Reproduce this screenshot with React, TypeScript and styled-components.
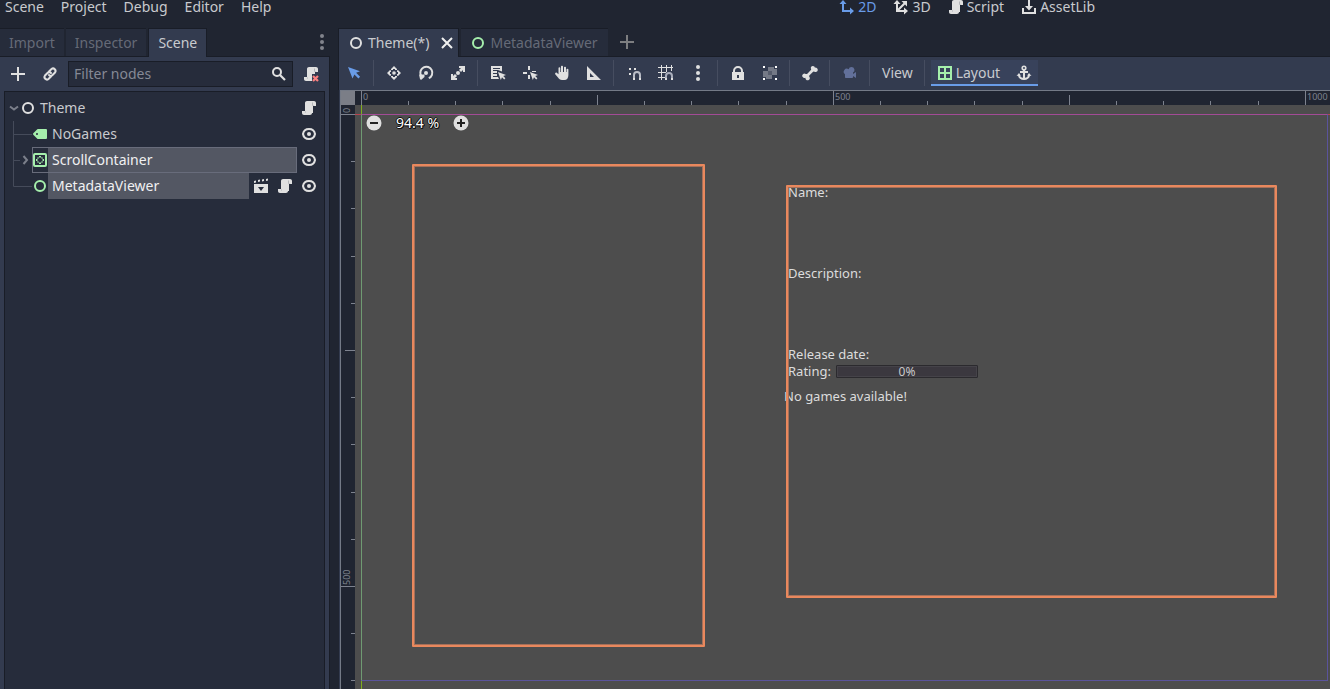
import React, { useEffect, useState } from "react";
import styled, { createGlobalStyle, css } from "styled-components";

const color = {
  base: "#333b4f",
  dark: "#262c3b",
  darker: "#202531",
  edge: "#191d27",
  line: "#464d60",
  text: "#c8cace",
  dim: "#656a77",
  icon: "#e0e0e0",
  accent: "#699ce8",
  green: "#a5efac",
  orange: "#e9885d",
};

const GlobalStyle = createGlobalStyle`
  * { box-sizing: border-box; }
  body { margin: 0; background: ${color.darker}; }
  button, input { font: inherit; color: inherit; }
  ul { list-style: none; margin: 0; padding: 0; }
`;

const Editor = styled.div`
  display: flex;
  flex-direction: column;
  height: 100vh;
  overflow: hidden;
  background: ${color.darker};
  color: ${color.text};
  font: 14px/20px "Noto Sans", "Open Sans", sans-serif;
`;

const PlainButton = styled.button`
  display: flex;
  align-items: center;
  justify-content: center;
  padding: 0;
  border: 0;
  background: none;
  white-space: nowrap;
  flex: none;
`;

const Header = styled.header`
  display: flex;
  flex: none;
  height: 28px;
  align-items: flex-start;
  justify-content: space-between;
  padding: 0 235px 0 5px;
  line-height: 14px;
`;

const MenuBar = styled.nav`
  display: flex;
  gap: 17px;
`;

const ModeButton = styled(PlainButton)<{ $on?: boolean }>`
  height: 14px;
  gap: 3px;
  color: ${(p) => (p.$on ? color.accent : color.text)};
`;

const Workspace = styled.div`
  display: flex;
  flex: 1;
  min-height: 0;
  gap: 8px;
`;

const Dock = styled.aside`
  display: flex;
  flex-direction: column;
  flex: none;
  width: 330px;
  min-height: 0;
`;

const Main = styled.main`
  display: flex;
  flex-direction: column;
  flex: 1;
  min-width: 0;
`;

const TabStrip = styled.div`
  display: flex;
  flex: none;
  height: 29px;
  gap: 2px;
  border-bottom: 1px solid ${color.edge};
`;

const Tab = styled(PlainButton)<{ $on?: boolean }>`
  height: 28px;
  padding: 0 9px;
  border-top: 1px solid ${color.edge};
  background: ${color.dark};
  color: ${color.dim};
  ${(p) =>
    p.$on &&
    css`
      height: 29px;
      border-left: 1px solid ${color.edge};
      border-right: 1px solid ${color.edge};
      background: ${color.base};
      color: ${color.text};
    `}
`;

const SceneTab = styled(Tab)`
  gap: 4px;
  padding-right: ${(p) => (p.$on ? 3 : 10)}px;
`;

const CloseMark = styled.svg`
  margin-left: 6px;
`;

const StripButton = styled(PlainButton)<{ $end?: boolean }>`
  width: 34px;
  height: 28px;
  ${(p) => p.$end && "width: 16px; margin-left: auto;"}
`;

const DockBody = styled.div`
  display: flex;
  flex-direction: column;
  flex: 1;
  min-height: 0;
  gap: 4px;
  padding: 4px 4px 0;
  border-right: 1px solid ${color.edge};
  background: ${color.base};
`;

const DockTools = styled.div`
  display: flex;
  flex: none;
  gap: 4px;
`;

const ToolButton = styled(PlainButton)`
  width: 28px;
  height: 26px;
`;

const FilterBox = styled.label`
  display: flex;
  align-items: center;
  flex: 1;
  min-width: 0;
  height: 26px;
  padding: 0 5px;
  border: 1px solid ${color.edge};
  background: ${color.dark};
`;

const FilterInput = styled.input`
  flex: 1;
  min-width: 0;
  padding: 0;
  border: 0;
  outline: 0;
  background: none;
  &::placeholder {
    color: #858995;
    opacity: 1;
  }
`;

const TreePanel = styled.div`
  flex: 1;
  min-height: 0;
  padding-top: 3px;
  border: 1px solid ${color.edge};
  border-bottom: 0;
  background: ${color.dark};
`;

const TreeRow = styled.li`
  display: flex;
  align-items: center;
  height: 26px;
  padding-right: 3px;
`;

const Guide = styled.svg`
  flex: none;
`;

const NodeButton = styled(PlainButton)<{ $focus?: boolean }>`
  flex: 1;
  height: 26px;
  justify-content: flex-start;
  ${(p) => p.$focus && "outline: 1px solid #686c7b; outline-offset: -1px;"}
`;

const NodeName = styled.span<{ $selected?: boolean }>`
  flex: 1;
  padding-left: 4px;
  line-height: 26px;
  text-align: left;
  ${(p) => p.$selected && "background: #535763; color: #f0f0f1;"}
`;

const RowAction = styled(PlainButton)`
  width: 24px;
  height: 24px;
`;

const CanvasTools = styled.div`
  display: flex;
  flex: none;
  align-items: flex-start;
  gap: 4px;
  height: 33px;
  padding: 3px 1px 0;
  border-left: 1px solid ${color.edge};
  background: ${color.base};
`;

const Separator = styled.span`
  flex: none;
  width: 4px;
  height: 26px;
  background: linear-gradient(${color.line}, ${color.line}) 1px 0 / 1px 100% no-repeat;
`;

const TextButton = styled(PlainButton)`
  height: 26px;
  padding: 0 6px;
`;

const LayoutGroup = styled.div`
  display: flex;
  align-items: center;
  height: 26px;
  padding: 0 6px;
  gap: 16px;
  background: #38425b;
  box-shadow: inset 0 -2px ${color.accent};
`;

const LayoutButton = styled(PlainButton)`
  gap: 3px;
`;

const Viewport = styled.section`
  display: grid;
  flex: 1;
  min-height: 0;
  grid-template: 14px minmax(0, 1fr) / 14px minmax(0, 1fr);
  margin-left: 2px;
  border-top: 1px solid #747a86;
  border-left: 1px solid #747a86;
  box-shadow: -1px 0 ${color.base};
`;

const Corner = styled.div`
  background: #7b7e87;
`;

const RulerSvg = styled.svg`
  display: block;
  width: 100%;
  height: 100%;
  overflow: hidden;
  background: ${color.darker};
  font-size: 9px;
`;

const Stage = styled.div`
  position: relative;
  overflow: hidden;
  background: #4d4d4d;
  color: #dcdcdc;
`;

type Box = { $x: number; $y: number; $w: number; $h: number };

const placed = css<Box>`
  position: absolute;
  left: ${(p) => p.$x}px;
  top: ${(p) => p.$y}px;
  width: ${(p) => p.$w}px;
  height: ${(p) => p.$h}px;
`;

const AxisX = styled.div`
  position: absolute;
  left: 0;
  right: 0;
  top: 9px;
  height: 1px;
  background: #b8434f;
`;

const AxisY = styled.div`
  position: absolute;
  top: 0;
  bottom: 0;
  left: 6px;
  width: 1px;
  background: #7fae1c;
`;

const Bounds = styled.div<Box>`
  ${placed}
  border: 1px solid #5a539b;
  border-top-color: #a34b96;
  border-left-color: #6f9a72;
`;

const Selection = styled.div<Box>`
  ${placed}
  border: 2px solid ${color.orange};
  border-radius: 1px;
  box-shadow: inset 0 0 0 1px #a5705a;
`;

const CanvasText = styled.span<{ $x: number; $y: number }>`
  position: absolute;
  left: ${(p) => p.$x}px;
  top: ${(p) => p.$y}px;
  font-size: 13px;
  line-height: 16px;
  white-space: nowrap;
`;

const Progress = styled.div<Box>`
  ${placed}
  border: 1px solid #2b2a2e;
  border-radius: 1px;
  background: #3b383f;
  box-shadow: inset 0 0 0 1px #454349;
  color: #c9c9ca;
  font-size: 12px;
  line-height: 11px;
  text-align: center;
`;

const ZoomBar = styled.div`
  position: absolute;
  left: 11px;
  top: 9px;
  display: flex;
  align-items: center;
  gap: 12px;
`;

const ZoomValue = styled.span`
  width: 47px;
  text-align: center;
  line-height: 18px;
  color: #fff;
  text-shadow: 1px 0 #111, -1px 0 #111, 0 1px #111, 0 -1px #111, 1px 1px #111;
`;

const Glyph = ({ children, tint = color.icon }: { children: React.ReactNode; tint?: string }) => (
  <svg width="16" height="16" viewBox="0 0 16 16" fill={tint} aria-hidden="true">
    {children}
  </svg>
);

const Ring = ({ tint = color.icon }: { tint?: string }) => (
  <Glyph>
    <circle cx="8" cy="8" r="5" fill="none" stroke={tint} strokeWidth="2" />
  </Glyph>
);

const ScriptShape = () => (
  <>
    <path d="M6 1c-1.100 0-2 .9-2 2v8H1v2c0 1.200.8 2 2 2h6c1.100 0 2-.9 2-2h1V6h3V3c0-1.100-.9-2-2-2z" />
    <path d="M11.500 2.500V5.500H12.500" fill="none" stroke="#b4b5b9" strokeWidth="1" />
    <path d="M4 11h1v2H4z" fill="#c6c7ca" />
  </>
);

const ScriptIcon = () => (
  <Glyph>
    <ScriptShape />
  </Glyph>
);

const DetachScriptIcon = () => (
  <Glyph>
    <ScriptShape />
    <rect x="9" y="8" width="7" height="8" fill={color.base} />
    <path d="M10 10l5 5M15 10l-5 5" stroke="#fc7f7f" strokeWidth="2.200" />
  </Glyph>
);

const EyeIcon = () => (
  <Glyph>
    <path d="M8 3C4.800 3 2.500 5.200 2 8c.5 2.800 2.800 5 6 5s5.500-2.200 6-5c-.5-2.800-2.800-5-6-5z" fill="none" stroke={color.icon} strokeWidth="2" />
    <circle cx="8" cy="8" r="2" />
  </Glyph>
);

const PlusShape = () => <path d="M7 1h2v6h6v2H9v6H7V9H1V7h6z" />;

const DotsShape = () => (
  <>
    <circle cx="8" cy="2" r="2" />
    <circle cx="8" cy="8" r="2" />
    <circle cx="8" cy="14" r="2" />
  </>
);

const CursorShape = () => <path d="M8 7l2.800 8 1.200-2.700 2.200 2.200 1.200-1.200-2.200-2.200L16 9.900z" />;

const icons = {
  select: (
    <Glyph tint={color.accent}>
      <path d="M2 2l4.500 11.500 1.900-4 4 4 1.700-1.700-4-4 3.900-1.500z" />
    </Glyph>
  ),
  move: (
    <Glyph>
      <circle cx="8" cy="8" r="1.800" />
      <path d="M8 1l3 3v1H9V4H7v1H5V4zM8 15l3-3v-1H9v1H7v-1H5v1zM1 8l3-3h1v2H4v2h1v2H4zM15 8l-3-3h-1v2h1v2h-1v2h1z" />
      <path d="M5 4v1.500L4 5zM11 4v1.500l1-.5zM5 12v-1.500L4 11zM11 12v-1.500l1 .5z" fill={color.base} />
    </Glyph>
  ),
  rotate: (
    <Glyph>
      <circle cx="8" cy="8" r="2" />
      <path d="M10.800 13.200A6 6 0 1 0 3 10.500" fill="none" stroke={color.icon} strokeWidth="2" />
      <path d="M1 9.500h5.500V12L3 15l-1-1z" />
    </Glyph>
  ),
  scale: (
    <Glyph>
      <circle cx="8" cy="8" r="2" />
      <path d="M9 2V1h6v6h-2V5l-2 2-2-2 2-2H9zM7 14v1H1V9h2v2l2-2 2 2-2 2h2z" />
    </Glyph>
  ),
  list: (
    <Glyph>
      <path fillRule="evenodd" d="M1 1h11v5.500L8 5H3v1h4v2H3v1h4v2H3v1h5l1 2H1zM3 3h7v1H3z" />
      <CursorShape />
    </Glyph>
  ),
  pivot: (
    <Glyph>
      <path d="M6 1h2v4H6zM1 7h4v2H1zM10 6h4v1h-4zM6 10h2v4H6z" />
      <CursorShape />
    </Glyph>
  ),
  pan: (
    <Glyph>
      <path d="M7 1.500c0-1 2-1 2 0V7h1V2.500c0-1 2-1 2 0V7h.5V4.500c0-1 1.900-1 1.900 0V10c0 3-1.500 5-4 5H8c-2 0-3-1-4-2.500L1.200 9.200C.8 8 2 7 3 8l1.500 1.200V3c0-1 1.800-1 1.800 0v4H7z" />
    </Glyph>
  ),
  ruler: (
    <Glyph>
      <path fillRule="evenodd" d="M1 1v14h14zM4 8v4h4z" />
    </Glyph>
  ),
  snap: (
    <Glyph>
      <path d="M3 3h2v2H3zM3 8h2v2H3zM8 3h2v2H8zM7 13h2v2H7zM13 13h2v2h-2z" />
      <path d="M8 13v-3a3 3 0 0 1 6 0v3" fill="none" stroke="#b9bcc6" strokeWidth="2" />
    </Glyph>
  ),
  grid: (
    <Glyph>
      <path d="M3.500 0v15M8.500 0v7M13.500 0v6M0 2.500h15M0 7.500h8M0 12.500h7" fill="none" stroke={color.icon} />
      <path d="M8 13v-2a3 3 0 0 1 6 0v2" fill="none" stroke="#a9adbb" strokeWidth="2" />
      <path d="M7 13h2v2H7zM13 13h2v2h-2z" />
    </Glyph>
  ),
  dots: (
    <Glyph>
      <DotsShape />
    </Glyph>
  ),
  lock: (
    <Glyph>
      <path d="M4 8V6a4 4 0 0 1 8 0v2" fill="none" stroke={color.icon} strokeWidth="2" />
      <path fillRule="evenodd" d="M2 7h12v8H2zM7 10v3h2v-3z" />
    </Glyph>
  ),
  group: (
    <Glyph>
      <path d="M6 2h9v8h-5v4H1V6h5z" fill="#747986" />
      <path d="M6 6h4v4H6z" fill="#565c6c" />
      <path d="M0 0h4v4H0zM12 0h4v4h-4zM0 12h4v4H0z" fill={color.base} />
      <path d="M1 1h2v2H1zM13 1h2v2h-2zM1 13h2v2H1zM13 13h2v2h-2z" fill="#fff" />
    </Glyph>
  ),
  bone: (
    <Glyph>
      <path d="M11 1a2 2 0 0 0-2 2.800c.3.800.1 1.100-.6 1.800L5.600 8.400c-.7.600-1.100.8-1.800.6a2.200 2.200 0 1 0-.3 3.700 2.200 2.200 0 1 0 3.800-1c-.3-.9-.1-1.200.5-1.800l2.800-2.700c.6-.6 1-.8 1.800-.5a2.200 2.200 0 1 0 .6-4A2.100 2.100 0 0 0 11 1z" />
    </Glyph>
  ),
  camera: (
    <Glyph tint="#62709a">
      <path d="M9.500 2A3 3 0 0 0 6.600 4.300 3 3 0 1 0 3 9.200V12c0 .6.400 1 1 1h6c.6 0 1-.4 1-1v-1l3 2V7l-3 2V7.600A3 3 0 0 0 9.500 2z" />
    </Glyph>
  ),
  anchor: (
    <Glyph>
      <circle cx="8" cy="3" r="1.800" fill="none" stroke={color.icon} strokeWidth="1.600" />
      <path d="M7 4.500h2V6h3v2H9v4.800c1.800-.3 2.700-1.200 3-2.300l-1 .3L13 8l2.500 3-1.500-.2C13.500 13.500 11.200 15 8 15s-5.500-1.500-6-4.200L.5 11 3 8l2 2.800-1-.3c.3 1.100 1.200 2 3 2.300V8H4V6h3z" />
    </Glyph>
  ),
};

type Tool = keyof typeof icons;
const toolGroups: [Tool, string][][] = [
  [["select", "Select Mode"]],
  [["move", "Move Mode"], ["rotate", "Rotate Mode"], ["scale", "Scale Mode"]],
  [["list", "List Select"], ["pivot", "Change Pivot"], ["pan", "Pan Mode"], ["ruler", "Ruler Mode"]],
  [["snap", "Smart Snap"], ["grid", "Grid Snap"], ["dots", "Snapping Options"]],
  [["lock", "Lock Object"], ["group", "Group Objects"]],
  [["bone", "Skeleton Options"]],
  [["camera", "Camera Override"]],
];

// One tick per 50 canvas units at the current zoom.
const step = 47.2;
const tickLength = (i: number) => (i % 10 === 0 ? 14 : i % 5 === 0 ? 10 : 4);
const ticksWithin = (length: number) => Array.from({ length: Math.max(1, Math.ceil(length / step)) }, (_, i) => i);
const tickColor = "#7d828e";

function useWindowSize() {
  const [size, setSize] = useState({ width: window.innerWidth, height: window.innerHeight });
  useEffect(() => {
    const update = () => setSize({ width: window.innerWidth, height: window.innerHeight });
    window.addEventListener("resize", update);
    return () => window.removeEventListener("resize", update);
  }, []);
  return size;
}

const HorizontalRuler = ({ length }: { length: number }) => (
  <RulerSvg aria-label="Horizontal ruler">
    {ticksWithin(length).map((i) => {
      const x = Math.floor(6.3 + i * step);
      return (
        <g key={i} fill={tickColor}>
          <rect x={x} y={14 - tickLength(i)} width="1" height={tickLength(i)} />
          {i % 10 === 0 && <text x={x + 2} y="9">{i * 50}</text>}
        </g>
      );
    })}
  </RulerSvg>
);

const VerticalRuler = ({ length }: { length: number }) => (
  <RulerSvg aria-label="Vertical ruler">
    {ticksWithin(length).map((i) => {
      const y = Math.floor(9.4 + i * step);
      return (
        <g key={i} fill={tickColor}>
          <rect x={14 - tickLength(i)} y={y} width={tickLength(i)} height="1" />
          {i % 10 === 0 && <text transform={`translate(9 ${y - 1}) rotate(-90)`}>{i * 50}</text>}
        </g>
      );
    })}
  </RulerSvg>
);

const Branch = ({ line, chevron, width = 27 }: { line?: string; chevron?: string; width?: number }) => (
  <Guide width={width} height="26" fill="none" aria-hidden="true">
    {line && <path d={line} stroke="#454b5a" />}
    {chevron && <path d={chevron} stroke="#7b7f8a" strokeWidth="2" />}
  </Guide>
);

export default function App() {
  const { width, height } = useWindowSize();
  return (
    <>
      <GlobalStyle />
      <Editor>
        <Header>
          <MenuBar aria-label="Main menu">
            {["Scene", "Project", "Debug", "Editor", "Help"].map((m) => (
              <PlainButton key={m}>{m}</PlainButton>
            ))}
          </MenuBar>
          <MenuBar aria-label="Workspaces">
            <ModeButton $on>
              <Glyph tint={color.accent}>
                <path d="M4 1L.5 5H3v8h8v2.500L15 12l-4-3.500V11H5V5h2.500z" />
              </Glyph>
              2D
            </ModeButton>
            <ModeButton>
              <Glyph>
                <path d="M4 1L.5 5H3v8h8v2.500l4-3.500-4-3.500V11H6.500L12 5.500 14 7.500V2H8.500L10.500 4 5 9.500V5h2.500z" />
              </Glyph>
              3D
            </ModeButton>
            <ModeButton>
              <ScriptIcon />
              Script
            </ModeButton>
            <ModeButton>
              <Glyph>
                <path d="M7 1h2v6h3l-4 4.500L4 7h3zM1 9h2v4h10V9h2v6H1z" />
              </Glyph>
              AssetLib
            </ModeButton>
          </MenuBar>
        </Header>
        <Workspace>
          <Dock>
            <TabStrip>
              <Tab>Import</Tab>
              <Tab>Inspector</Tab>
              <Tab $on>Scene</Tab>
              <StripButton $end aria-label="Dock options">
                <Glyph tint="#81848c">
                  <DotsShape />
                </Glyph>
              </StripButton>
            </TabStrip>
            <DockBody>
              <DockTools>
                <ToolButton aria-label="Add node">
                  <Glyph>
                    <PlusShape />
                  </Glyph>
                </ToolButton>
                <ToolButton aria-label="Instance scene">
                  <Glyph>
                    <g fill="none" stroke={color.icon} strokeWidth="2" strokeLinecap="round">
                      <path d="M7 5.500L9.500 3a2.500 2.500 0 0 1 3.500 3.500L10.500 9a2.500 2.500 0 0 1-3.500 0" />
                      <path d="M9 10.500L6.500 13A2.500 2.500 0 0 1 3 9.500L5.500 7A2.500 2.500 0 0 1 9 7" />
                    </g>
                  </Glyph>
                </ToolButton>
                <FilterBox>
                  <FilterInput placeholder="Filter nodes" aria-label="Filter nodes" />
                  <Glyph>
                    <circle cx="6" cy="6" r="4" fill="none" stroke={color.icon} strokeWidth="2" />
                    <path d="M9 9l5 5" stroke={color.icon} strokeWidth="2.200" />
                  </Glyph>
                </FilterBox>
                <ToolButton aria-label="Detach script">
                  <DetachScriptIcon />
                </ToolButton>
              </DockTools>
              <TreePanel>
                <ul aria-label="Scene tree">
                  <TreeRow>
                    <Branch width={15} chevron="M5 11.500l4 3 4-3" />
                    <NodeButton>
                      <Ring />
                      <NodeName>Theme</NodeName>
                    </NodeButton>
                    <RowAction aria-label="Open script"><ScriptIcon /></RowAction>
                  </TreeRow>
                  <TreeRow>
                    <Branch line="M8.500 0v26M8.500 13.500H27" />
                    <NodeButton>
                      <Glyph tint={color.green}>
                        <path fillRule="evenodd" d="M6 3a1 1 0 0 0-.7.300l-4 4a1 1 0 0 0 0 1.400l4 4a1 1 0 0 0 .7.300h8a1 1 0 0 0 1-1V4a1 1 0 0 0-1-1zM5 7a1 1 0 0 1 0 2 1 1 0 0 1 0-2z" />
                      </Glyph>
                      <NodeName>NoGames</NodeName>
                    </NodeButton>
                    <RowAction aria-label="Toggle visibility"><EyeIcon /></RowAction>
                  </TreeRow>
                  <TreeRow>
                    <Branch line="M8.500 0v26M8.500 13.500H15" chevron="M18.500 9l3.500 4-3.500 4" />
                    <NodeButton $focus>
                      <Glyph tint={color.green}>
                        <rect x="2" y="2" width="12" height="12" rx="1" fill="none" stroke={color.green} strokeWidth="2" />
                        <path d="M6.500 5.500l-1 1M9.500 5.500l1 1M6.500 10.500l-1-1M9.500 10.500l1-1" stroke={color.green} strokeWidth="1.200" />
                        <path d="M7 4h2v1.500H7zM7 10.500h2V12H7zM4 7h1.500v2H4zM10.500 7H12v2h-1.500z" />
                      </Glyph>
                      <NodeName $selected>ScrollContainer</NodeName>
                    </NodeButton>
                    <RowAction aria-label="Toggle visibility"><EyeIcon /></RowAction>
                  </TreeRow>
                  <TreeRow>
                    <Branch line="M8.500 0v13.500H27" />
                    <NodeButton>
                      <Ring tint={color.green} />
                      <NodeName $selected>MetadataViewer</NodeName>
                    </NodeButton>
                    <RowAction aria-label="Open in editor">
                      <Glyph>
                        <path d="M1 3l2-.5v2L1 5zM5 2l2-.5v2L5 4zM9 1.500l2-.5v2L9 3.500zM13 1l2-.5v2l-2 .5z" />
                        <path fillRule="evenodd" d="M1 6h14v9H1zM5 9l3 4 3-4z" />
                      </Glyph>
                    </RowAction>
                    <RowAction aria-label="Open script"><ScriptIcon /></RowAction>
                    <RowAction aria-label="Toggle visibility"><EyeIcon /></RowAction>
                  </TreeRow>
                </ul>
              </TreePanel>
            </DockBody>
          </Dock>
          <Main>
            <TabStrip>
              <SceneTab $on>
                <Ring />
                Theme(*)
                <CloseMark width="16" height="16" viewBox="0 0 16 16">
                  <path d="M3 3l10 10M13 3L3 13" stroke="#f0f0f0" strokeWidth="2" />
                </CloseMark>
              </SceneTab>
              <SceneTab>
                <Ring tint={color.green} />
                MetadataViewer
              </SceneTab>
              <StripButton aria-label="New scene">
                <Glyph tint="#7d7e80">
                  <PlusShape />
                </Glyph>
              </StripButton>
            </TabStrip>
            <CanvasTools>
              {toolGroups.map((group) => (
                <React.Fragment key={group[0][0]}>
                  {group.map(([name, label]) => (
                    <ToolButton key={name} aria-label={label}>{icons[name]}</ToolButton>
                  ))}
                  <Separator />
                </React.Fragment>
              ))}
              <TextButton>View</TextButton>
              <Separator />
              <LayoutGroup>
                <LayoutButton>
                  <Glyph tint={color.green}>
                    <path fillRule="evenodd" d="M1 1h14v14H1zM3 3v4h4V3zM9 3v4h4V3zM3 9v4h4V9zM9 9v4h4V9z" />
                  </Glyph>
                  Layout
                </LayoutButton>
                <PlainButton aria-label="Anchor mode">{icons.anchor}</PlainButton>
              </LayoutGroup>
            </CanvasTools>
            <Viewport>
              <Corner />
              <HorizontalRuler length={width - 355} />
              <VerticalRuler length={height - 105} />
              <Stage>
                <AxisY />
                <AxisX />
                <Bounds $x={6} $y={9} $w={967} $h={567} />
                <CanvasText $x={433} $y={79}>Name:</CanvasText>
                <CanvasText $x={433} $y={160}>Description:</CanvasText>
                <CanvasText $x={433} $y={241}>Release date:</CanvasText>
                <CanvasText $x={433} $y={258}>Rating:</CanvasText>
                <Progress $x={481} $y={260} $w={142} $h={13} role="progressbar" aria-valuenow={0} aria-label="Rating">
                  0%
                </Progress>
                <CanvasText $x={429} $y={283}>No games available!</CanvasText>
                <Selection $x={57} $y={59} $w={293} $h={483} />
                <Selection $x={431} $y={80} $w={491} $h={413} />
                <ZoomBar>
                  <PlainButton aria-label="Zoom out">
                    <Glyph>
                      <circle cx="8" cy="8" r="7.500" />
                      <path d="M4 7h8v2H4z" fill="#222" />
                    </Glyph>
                  </PlainButton>
                  <ZoomValue>94.4 %</ZoomValue>
                  <PlainButton aria-label="Zoom in">
                    <Glyph>
                      <circle cx="8" cy="8" r="7.500" />
                      <path d="M7 4h2v3h3v2H9v3H7V9H4V7h3z" fill="#222" />
                    </Glyph>
                  </PlainButton>
                </ZoomBar>
              </Stage>
            </Viewport>
          </Main>
        </Workspace>
      </Editor>
    </>
  );
}
